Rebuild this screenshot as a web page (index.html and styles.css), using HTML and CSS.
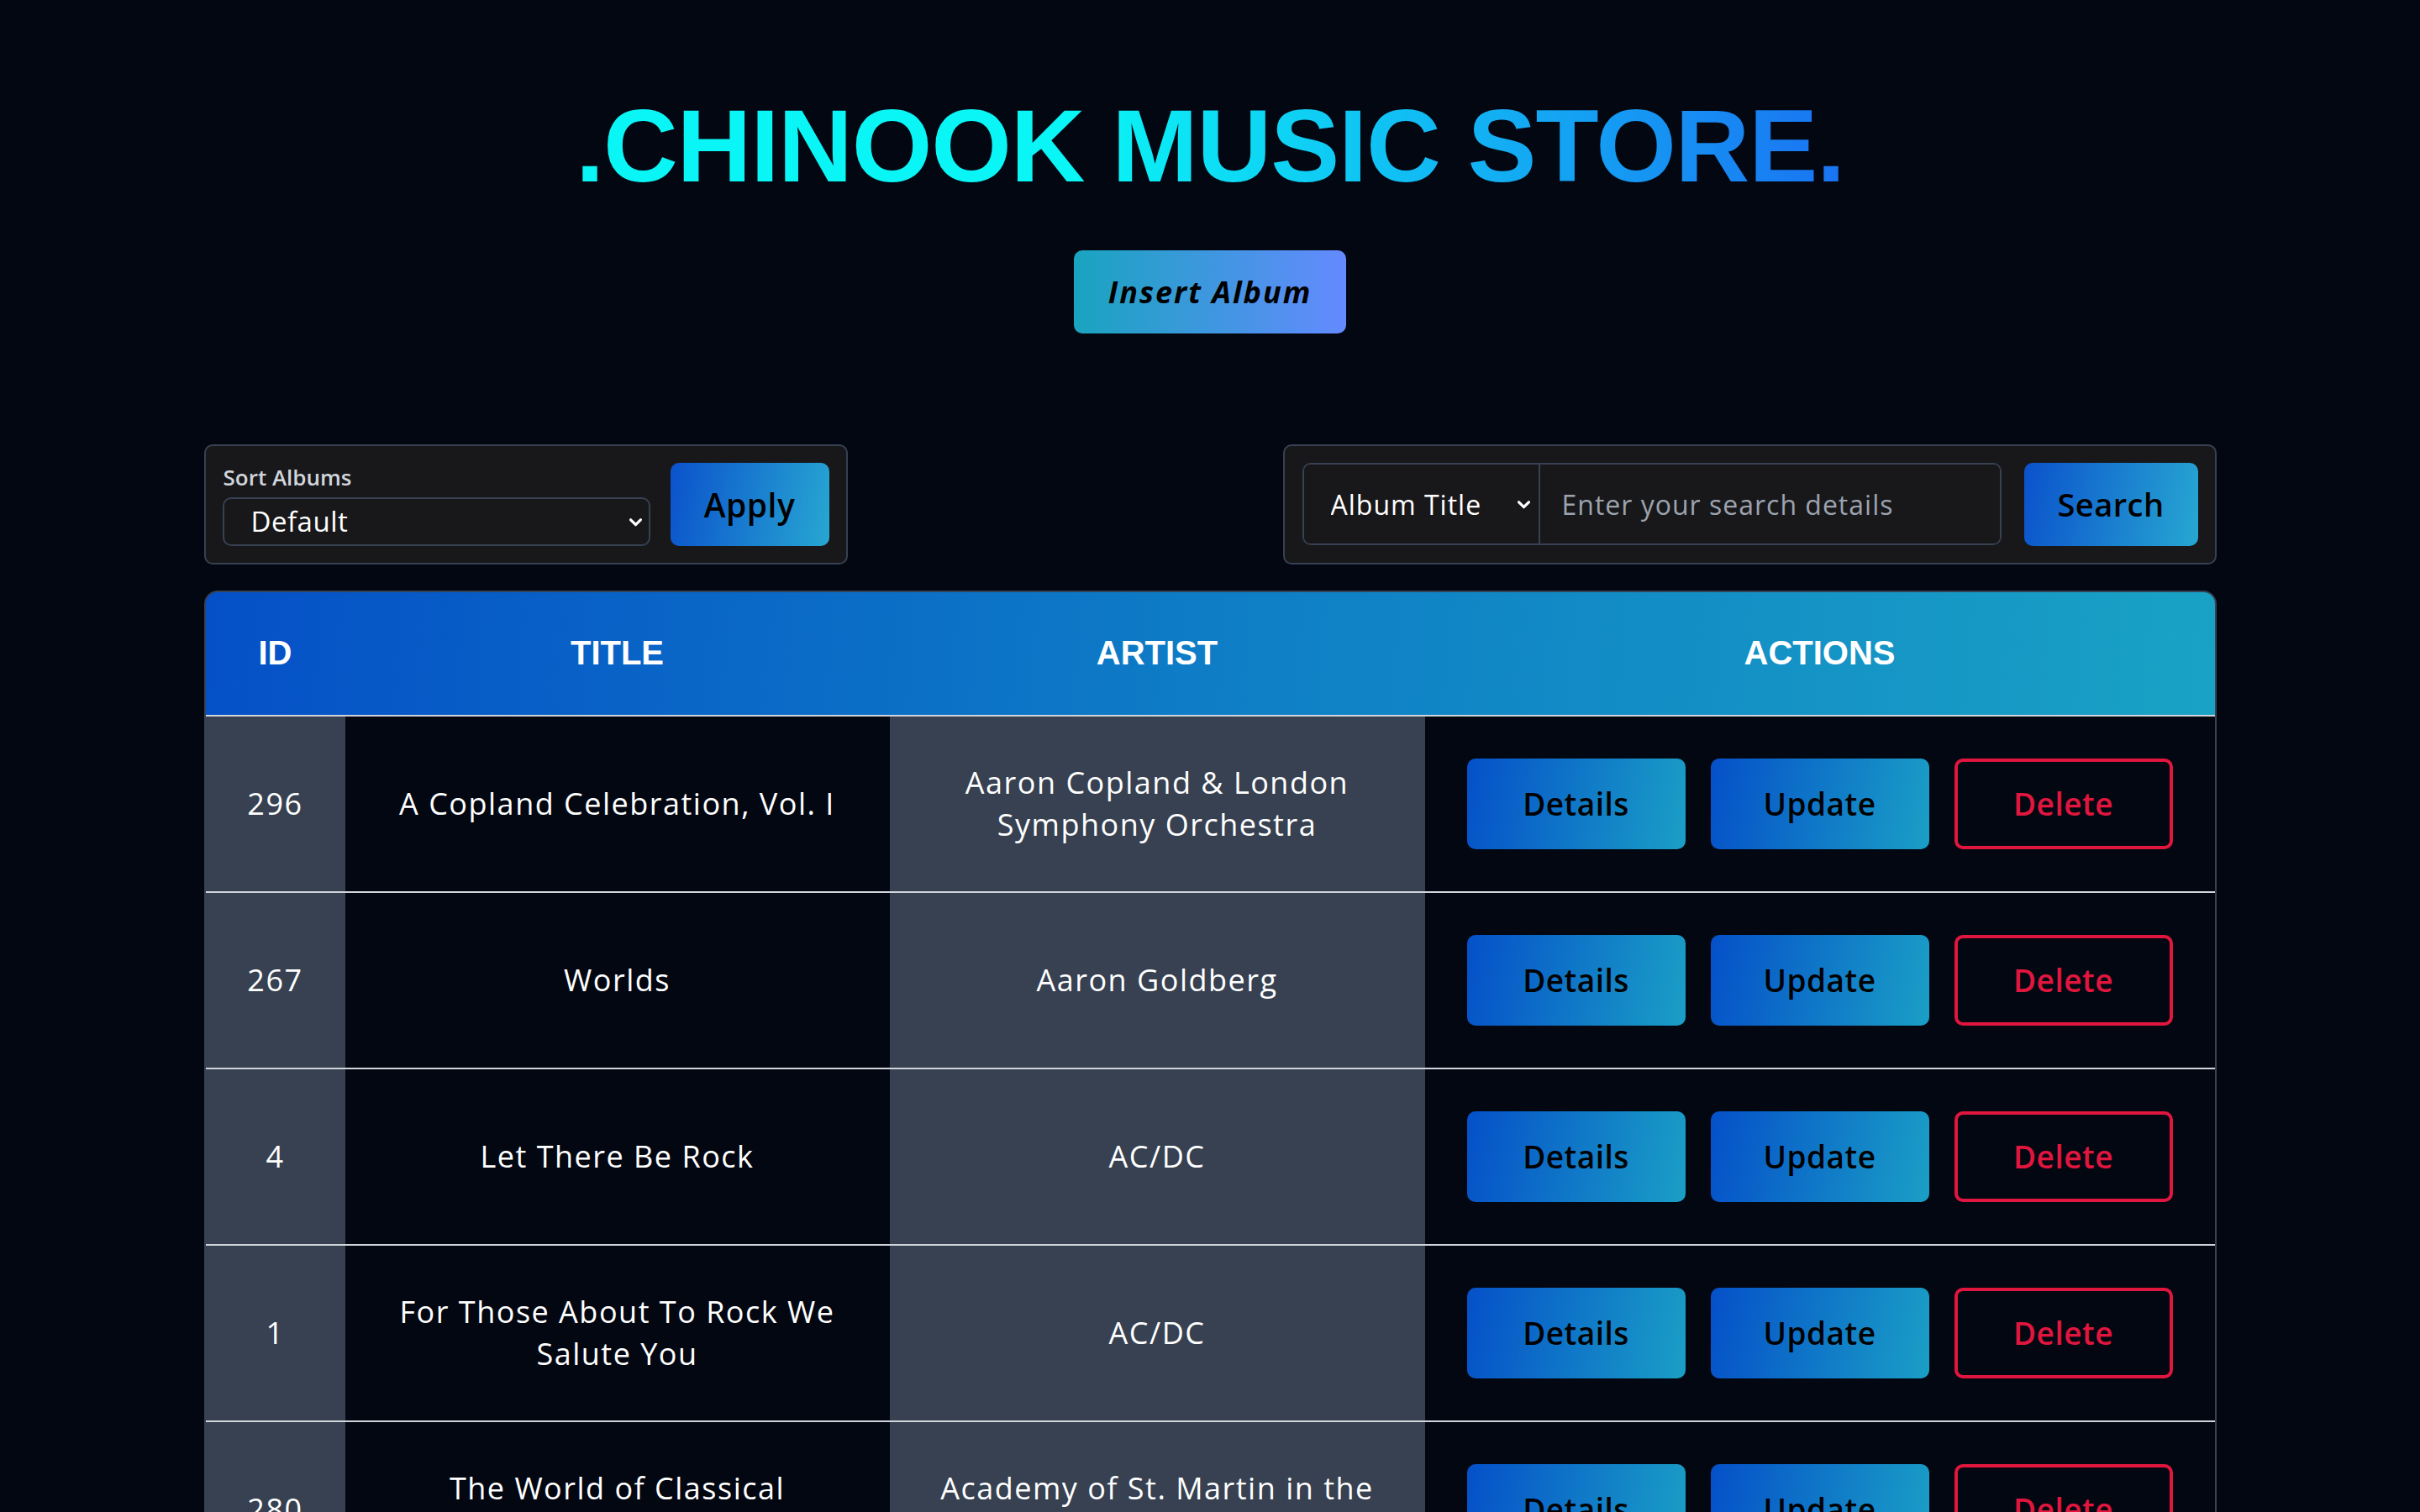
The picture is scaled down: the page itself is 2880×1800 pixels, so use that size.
FILE: index.html
```html
<!DOCTYPE html>
<html lang="en">
<head>
<meta charset="utf-8">
<title>Chinook Music Store</title>
<link rel="stylesheet" href="styles.css">
</head>
<body>
<div class="page">
  <header class="hero">
    <h1 class="brand"><span class="brand-text">.CHINOOK MUSIC STORE.</span></h1>
    <button class="insert-btn" type="button">Insert Album</button>
  </header>

  <section class="controls">
    <form class="panel sort-panel">
      <div class="field">
        <label class="field-label" for="sort">Sort Albums</label>
        <div class="select-wrap">
          <select class="select sort-select" id="sort">
            <option>Default</option>
            <option>Title A-Z</option>
            <option>Title Z-A</option>
          </select>
          <svg class="chevron" viewBox="0 0 14 9" aria-hidden="true"><path d="M1.5 1.5 L7 7 L12.5 1.5" /></svg>
        </div>
      </div>
      <button class="grad-btn apply-btn" type="button">Apply</button>
    </form>

    <form class="panel search-panel">
      <div class="search-group">
        <div class="select-wrap search-select-wrap">
          <select class="select search-select">
            <option>Album Title</option>
            <option>Artist</option>
          </select>
          <svg class="chevron" viewBox="0 0 14 9" aria-hidden="true"><path d="M1.5 1.5 L7 7 L12.5 1.5" /></svg>
        </div>
        <input class="search-input" type="text" placeholder="Enter your search details">
      </div>
      <button class="grad-btn search-btn" type="button">Search</button>
    </form>
  </section>

  <table class="albums">
    <colgroup>
      <col class="col-id">
      <col class="col-title">
      <col class="col-artist">
      <col class="col-actions">
    </colgroup>
    <thead>
      <tr>
        <th>ID</th>
        <th>TITLE</th>
        <th>ARTIST</th>
        <th>ACTIONS</th>
      </tr>
    </thead>
    <tbody>
      <tr>
        <td class="cell-id">296</td>
        <td class="cell-title">A Copland Celebration, Vol. I</td>
        <td class="cell-artist">Aaron Copland &amp; London Symphony Orchestra</td>
        <td class="cell-actions"><div class="actions"><button class="grad-btn act-btn" type="button">Details</button><button class="grad-btn act-btn" type="button">Update</button><button class="del-btn act-btn" type="button">Delete</button></div></td>
      </tr>
      <tr>
        <td class="cell-id">267</td>
        <td class="cell-title">Worlds</td>
        <td class="cell-artist">Aaron Goldberg</td>
        <td class="cell-actions"><div class="actions"><button class="grad-btn act-btn" type="button">Details</button><button class="grad-btn act-btn" type="button">Update</button><button class="del-btn act-btn" type="button">Delete</button></div></td>
      </tr>
      <tr>
        <td class="cell-id">4</td>
        <td class="cell-title">Let There Be Rock</td>
        <td class="cell-artist">AC/DC</td>
        <td class="cell-actions"><div class="actions"><button class="grad-btn act-btn" type="button">Details</button><button class="grad-btn act-btn" type="button">Update</button><button class="del-btn act-btn" type="button">Delete</button></div></td>
      </tr>
      <tr>
        <td class="cell-id">1</td>
        <td class="cell-title">For Those About To Rock We Salute You</td>
        <td class="cell-artist">AC/DC</td>
        <td class="cell-actions"><div class="actions"><button class="grad-btn act-btn" type="button">Details</button><button class="grad-btn act-btn" type="button">Update</button><button class="del-btn act-btn" type="button">Delete</button></div></td>
      </tr>
      <tr>
        <td class="cell-id">280</td>
        <td class="cell-title">The World of Classical Favourites</td>
        <td class="cell-artist">Academy of St. Martin in the Fields &amp; Sir Neville Marriner</td>
        <td class="cell-actions"><div class="actions"><button class="grad-btn act-btn" type="button">Details</button><button class="grad-btn act-btn" type="button">Update</button><button class="del-btn act-btn" type="button">Delete</button></div></td>
      </tr>
      <tr>
        <td class="cell-id">2</td>
        <td class="cell-title">Balls to the Wall</td>
        <td class="cell-artist">Accept</td>
        <td class="cell-actions"><div class="actions"><button class="grad-btn act-btn" type="button">Details</button><button class="grad-btn act-btn" type="button">Update</button><button class="del-btn act-btn" type="button">Delete</button></div></td>
      </tr>
      <tr>
        <td class="cell-id">3</td>
        <td class="cell-title">Restless and Wild</td>
        <td class="cell-artist">Accept</td>
        <td class="cell-actions"><div class="actions"><button class="grad-btn act-btn" type="button">Details</button><button class="grad-btn act-btn" type="button">Update</button><button class="del-btn act-btn" type="button">Delete</button></div></td>
      </tr>
    </tbody>
  </table>
</div>
</body>
</html>
```

FILE: styles.css
```css
* {
  box-sizing: border-box;
}

html,
body {
  margin: 0;
  background: #030712;
}

body {
  font-family: "Open Sans", "Noto Sans", sans-serif;
  color: #ffffff;
}

.page {
  width: 2395px;
  margin: 0 auto;
  padding-top: 100px;
  padding-bottom: 80px;
}

/* ---------- hero ---------- */
.hero {
  display: flex;
  flex-direction: column;
  align-items: center;
}

.brand {
  margin: 0;
  font-family: "Liberation Sans", "Arial", sans-serif;
  font-weight: 700;
  font-size: 123px;
  line-height: 1.2;
  letter-spacing: -1.2px;
}

.brand-text {
  background: linear-gradient(90deg, #0af5f5 0%, #0af5f5 40%, #1a73f2 100%);
  -webkit-background-clip: text;
  background-clip: text;
  color: transparent;
}

.insert-btn {
  margin-top: 50px;
  width: 324px;
  height: 99px;
  border: 0;
  border-radius: 10px;
  background: linear-gradient(90deg, #19a4bf 0%, #648aff 100%);
  font-family: "Open Sans", sans-serif;
  font-style: italic;
  font-weight: 700;
  font-size: 36px;
  letter-spacing: 2px;
  color: #000000;
}

/* ---------- controls ---------- */
.controls {
  margin-top: 132px;
  display: flex;
  justify-content: space-between;
  align-items: flex-start;
}

.panel {
  display: flex;
  align-items: flex-end;
  border: 2px solid #374151;
  border-radius: 10px;
  background: #18181b;
  padding: 20px;
}

.sort-panel {
  width: 766px;
  gap: 24px;
}

.search-panel {
  width: 1111px;
  align-items: center;
  gap: 27px;
  padding-left: 21px;
}

.field {
  display: flex;
  flex-direction: column;
}

.field-label {
  font-size: 26px;
  font-weight: 600;
  line-height: 34px;
  color: #d1d5db;
  margin-bottom: 7px;
  padding-left: 1px;
}

.select-wrap {
  position: relative;
  display: flex;
}

.select {
  appearance: none;
  -webkit-appearance: none;
  font-family: "Open Sans", sans-serif;
  color: #ffffff;
  background: #18181b;
  outline: none;
}

.sort-select {
  width: 509px;
  height: 58px;
  border: 2px solid #374151;
  border-radius: 10px;
  font-size: 33px;
  letter-spacing: 0.5px;
  padding: 0 50px 0 32px;
}

.chevron {
  position: absolute;
  right: 10px;
  top: 50%;
  width: 15px;
  height: 10px;
  margin-top: -4px;
  fill: none;
  stroke: #ffffff;
  stroke-width: 3;
  stroke-linecap: round;
  stroke-linejoin: round;
  pointer-events: none;
}

.search-group {
  display: flex;
  width: 832px;
  height: 98px;
  border: 2px solid #374151;
  border-radius: 10px;
  overflow: hidden;
  background: #18181b;
}

.search-select-wrap {
  width: 281px;
  border-right: 2px solid #374151;
}

.search-select {
  width: 100%;
  height: 100%;
  border: 0;
  font-size: 32px;
  letter-spacing: 1px;
  padding: 0 40px 0 32px;
}

.search-input {
  flex: 1;
  border: 0;
  outline: none;
  background: #18181b;
  color: #ffffff;
  font-family: "Open Sans", sans-serif;
  font-size: 32px;
  letter-spacing: 1px;
  padding: 0 26px;
}

.search-input::placeholder {
  color: #9ca3af;
}

.grad-btn {
  border: 0;
  border-radius: 10px;
  background: linear-gradient(100deg, #0550c9 0%, #1a9fc6 100%);
  font-family: "Open Sans", sans-serif;
  font-weight: 600;
  color: #000000;
}

.apply-btn {
  width: 190px;
  height: 99px;
  font-size: 39px;
  letter-spacing: 0.5px;
  background: linear-gradient(100deg, #0b52cc 0%, #27a7d2 100%);
}

.search-btn {
  width: 207px;
  height: 99px;
  font-size: 38px;
  letter-spacing: 0.5px;
  background: linear-gradient(100deg, #0b52cc 0%, #27a7d2 100%);
}

/* ---------- table ---------- */
.albums {
  width: 100%;
  margin-top: 31px;
  table-layout: fixed;
  border-collapse: separate;
  border-spacing: 0;
  border: 2px solid #374151;
  border-bottom: 0;
  border-radius: 16px 16px 0 0;
  background: linear-gradient(95deg, #0550c7 0%, #0e7dc6 50%, #19a2c5 100%);
  background-size: 100% 150px;
  background-repeat: no-repeat;
}

.col-id { width: 166px; }
.col-title { width: 648px; }
.col-artist { width: 637px; }
.col-actions { width: 940px; }

.albums th {
  height: 146px;
  padding: 0;
  font-family: "Liberation Sans", "Arial", sans-serif;
  font-weight: 700;
  font-size: 40px;
  color: #ffffff;
  text-align: center;
  vertical-align: middle;
}

.albums td {
  border-top: 2px solid #d1d5db;
  padding: 50px 36px;
  font-size: 36px;
  line-height: 50px;
  letter-spacing: 1.5px;
  text-align: center;
  vertical-align: middle;
  background: #030712;
}

.albums td.cell-id,
.albums td.cell-artist {
  background: #374151;
}

.albums td.cell-id {
  padding-left: 0;
  padding-right: 0;
}

.albums td.cell-actions {
  padding: 50px 20px;
}

.actions {
  display: flex;
  justify-content: center;
  gap: 30px;
}

.act-btn {
  width: 260px;
  height: 108px;
  font-family: "Open Sans", sans-serif;
  font-weight: 600;
  font-size: 37px;
  letter-spacing: 0.5px;
}

.del-btn {
  border: 4px solid #e0163e;
  border-radius: 10px;
  background: transparent;
  color: #e0163e;
}
```
